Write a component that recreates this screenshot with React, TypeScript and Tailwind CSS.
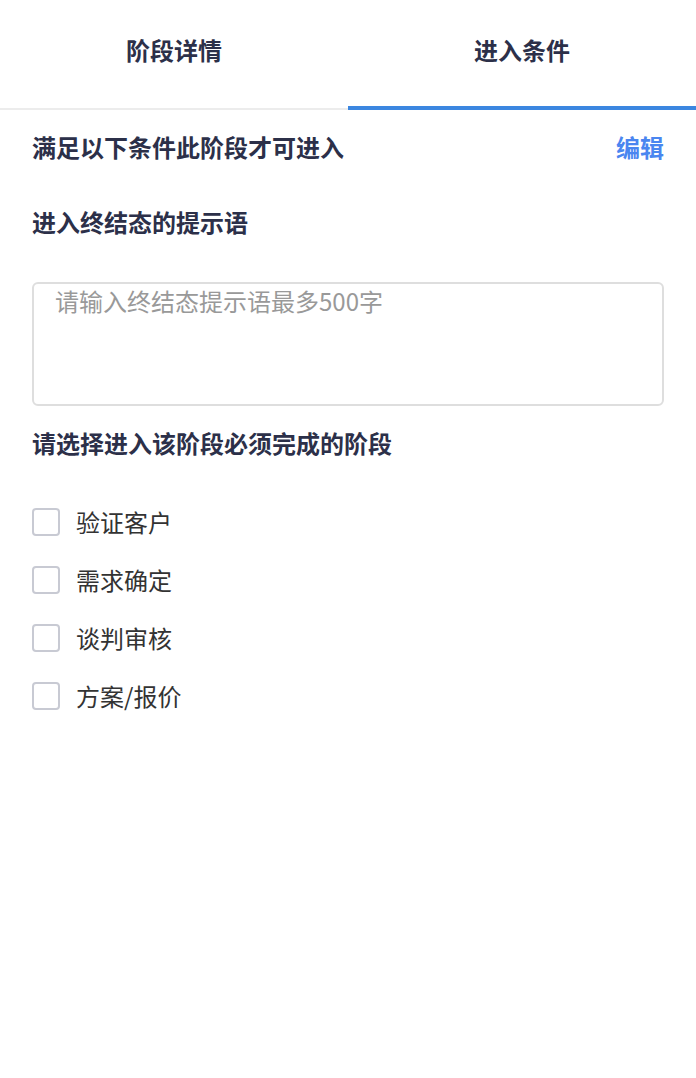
import { useState } from "react";

const stages = ["验证客户", "需求确定", "谈判审核", "方案/报价"];

export default function App() {
  const [tab, setTab] = useState(1);
  const [checked, setChecked] = useState<boolean[]>([false, false, false, false]);

  return (
    <main
      className="min-h-screen bg-white"
      style={{ fontFamily: '"Noto Sans CJK SC", "Noto Sans", sans-serif' }}
    >
      <div className="flex h-[110px] border-b-2 border-[#ececec]">
        {["阶段详情", "进入条件"].map((t, i) => (
          <button
            key={t}
            onClick={() => setTab(i)}
            className={`flex-1 flex items-center justify-center text-[24px] font-bold text-[#2c3049] -mb-[2px] ${
              tab === i ? "border-b-4 border-[#3b86e0] pb-[6px]" : "pb-[10px]"
            }`}
          >
            {t}
          </button>
        ))}
      </div>

      <section className="px-8">
        <div className="flex h-[74px] items-center justify-between">
          <h2 className="text-[24px] font-bold text-[#2c3049]">满足以下条件此阶段才可进入</h2>
          <button className="text-[24px] font-bold text-[#4a86f0]">编辑</button>
        </div>

        <h2 className="flex h-[76px] items-center text-[24px] font-bold text-[#2c3049]">
          进入终结态的提示语
        </h2>

        <textarea
          placeholder="请输入终结态提示语最多500字"
          className="mt-[22px] block h-[124px] w-full resize-none rounded-md border-2 border-[#dedede] px-[21px] pt-[1px] text-[24px] leading-[32px] text-[#333] outline-none placeholder:text-[#999]"
        />

        <h2 className="flex h-[74px] items-center text-[24px] font-bold text-[#2c3049]">
          请选择进入该阶段必须完成的阶段
        </h2>

        <ul className="mt-[13px]">
          {stages.map((s, i) => (
            <li key={s} className="flex h-[58px] items-center gap-4">
              <button
                onClick={() =>
                  setChecked((c) => c.map((v, j) => (j === i ? !v : v)))
                }
                className={`h-7 w-7 rounded-[4px] border-2 ${
                  checked[i] ? "border-[#3b86e0] bg-[#3b86e0]" : "border-[#c8cad3] bg-white"
                }`}
              />
              <span className="text-[24px] text-[#333]">{s}</span>
            </li>
          ))}
        </ul>
      </section>
    </main>
  );
}
